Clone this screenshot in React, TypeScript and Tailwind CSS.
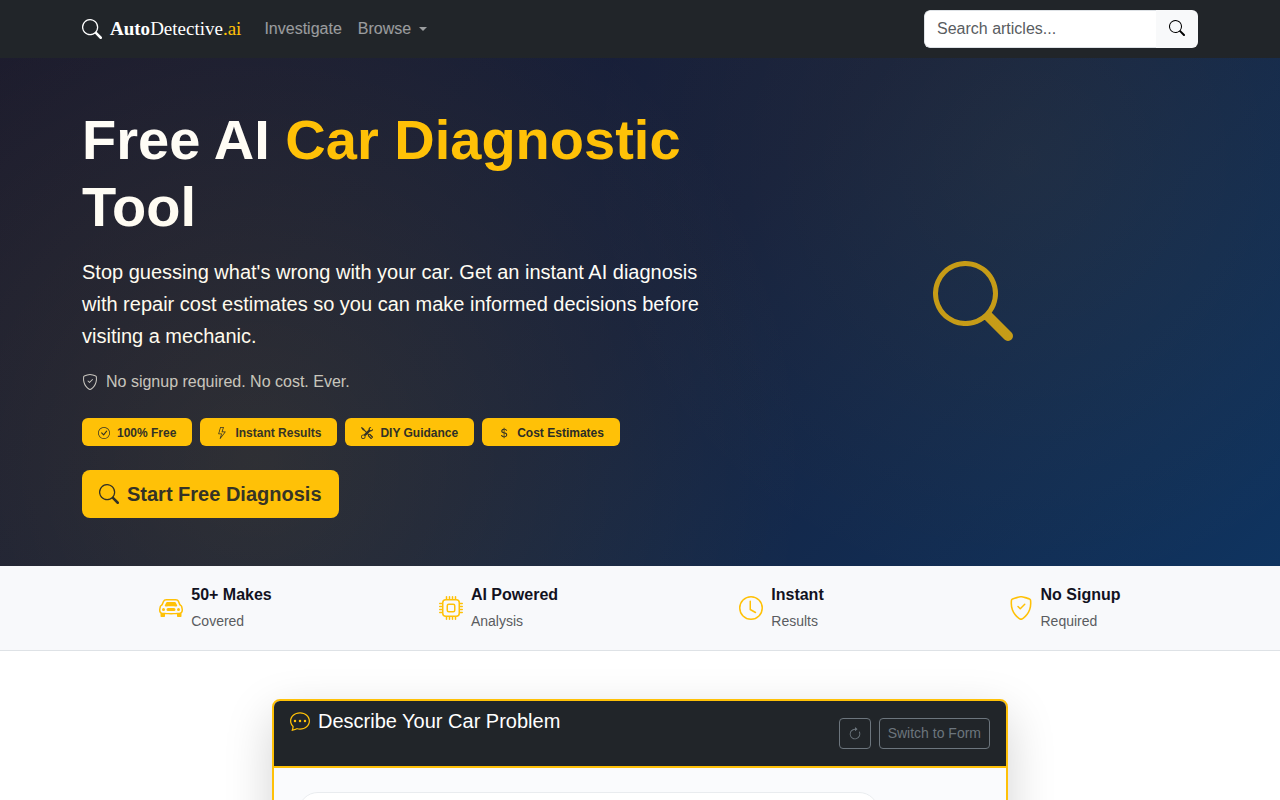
import type { ReactNode } from "react";
import type { IconType } from "react-icons";
import {
  BsArrowClockwise,
  BsCarFront,
  BsChatDots,
  BsCheckCircle,
  BsClock,
  BsCpu,
  BsCurrencyDollar,
  BsLightning,
  BsSearch,
  BsShieldCheck,
  BsTools,
} from "react-icons/bs";

const features: { icon: IconType; label: string }[] = [
  { icon: BsCheckCircle, label: "100% Free" },
  { icon: BsLightning, label: "Instant Results" },
  { icon: BsTools, label: "DIY Guidance" },
  { icon: BsCurrencyDollar, label: "Cost Estimates" },
];

const stats: { icon: IconType; title: string; caption: string }[] = [
  { icon: BsCarFront, title: "50+ Makes", caption: "Covered" },
  { icon: BsCpu, title: "AI Powered", caption: "Analysis" },
  { icon: BsClock, title: "Instant", caption: "Results" },
  { icon: BsShieldCheck, title: "No Signup", caption: "Required" },
];

function Container({ children, className = "" }: { children: ReactNode; className?: string }) {
  return <div className={`mx-auto w-full max-w-[1140px] px-3 ${className}`}>{children}</div>;
}

function Navbar() {
  return (
    <nav className="bg-[#212529] py-[10px]">
      <Container className="flex flex-wrap items-center justify-between gap-y-2">
        <div className="flex flex-wrap items-center">
          <a href="#home" className="mr-[23px] flex items-center gap-2 text-white">
            <BsSearch className="size-5" />
            <span className="font-['Liberation_Serif',serif] text-[19px] leading-[30px]">
              <strong>Auto</strong>Detective<span className="text-[#ffc107]">.ai</span>
            </span>
          </a>
          <div className="flex items-center gap-4 text-white/55">
            <a href="#chat">Investigate</a>
            <button type="button" className="flex items-center gap-2">
              Browse
              <span className="border-x-4 border-t-4 border-x-transparent border-t-current" />
            </button>
          </div>
        </div>
        <form role="search" className="flex h-[38px] w-[274px] overflow-hidden rounded-md">
          <input
            type="search"
            aria-label="Search articles"
            placeholder="Search articles..."
            className="min-w-0 flex-1 rounded-l-md border border-r-0 border-[#dee2e6] bg-white px-3 outline-none placeholder:text-[#595c5f]"
          />
          <button
            type="submit"
            aria-label="Search"
            className="bg-[#f8f9fa] px-[13px] pb-0.5 text-black"
          >
            <BsSearch className="size-4" />
          </button>
        </form>
      </Container>
    </nav>
  );
}

function Hero() {
  return (
    <section
      id="home"
      className="relative bg-[linear-gradient(135deg,#1a1a2e_0%,#16213e_50%,#0f3460_100%)] py-12 text-white"
    >
      <Container className="grid items-center gap-6 lg:grid-cols-12">
        <div className="lg:col-span-7">
          <h1 className="mb-4 text-[56px] leading-[67px] font-bold">
            Free AI <span className="text-[#ffc107]">Car Diagnostic</span> Tool
          </h1>
          <p className="mb-4 text-xl leading-8">
            Stop guessing what's wrong with your car. Get an instant AI diagnosis with repair cost
            estimates so you can make informed decisions before visiting a mechanic.
          </p>
          <p className="mb-6 flex items-center gap-2 pt-0.5 text-white/75">
            <BsShieldCheck className="size-4" />
            No signup required. No cost. Ever.
          </p>
          <ul className="mb-6 flex flex-wrap gap-2">
            {features.map(({ icon: Icon, label }) => (
              <li
                key={label}
                className="flex h-7 items-center gap-[7px] rounded-md bg-[#ffc107] px-4 pt-px text-xs font-bold text-[#212529]"
              >
                <Icon className="size-3" />
                {label}
              </li>
            ))}
          </ul>
          <a
            href="#chat"
            className="inline-flex h-12 items-center gap-2 rounded-lg bg-[#ffc107] px-[17px] align-top text-xl font-bold text-[#212529]"
          >
            <BsSearch className="size-5" />
            Start Free Diagnosis
          </a>
        </div>
        <div className="hidden justify-center pb-[22px] lg:col-span-5 lg:flex">
          <BsSearch className="size-20 text-[#ffc107] opacity-75" />
        </div>
      </Container>
      {/* warm glow over the whole banner */}
      <div className="pointer-events-none absolute inset-0 bg-[radial-gradient(circle_at_20%_80%,rgba(255,193,7,0.1)_0%,transparent_50%),radial-gradient(circle_at_80%_20%,rgba(255,193,7,0.05)_0%,transparent_40%)]" />
    </section>
  );
}

function Stats() {
  return (
    <section className="border-b border-[#dee2e6] bg-[#f8f9fb] py-4">
      <Container className="grid grid-cols-2 gap-4 md:grid-cols-4">
        {stats.map(({ icon: Icon, title, caption }) => (
          <div key={title} className="flex items-center justify-center gap-2">
            <Icon className="size-6 text-[#ffc107]" />
            <div className="leading-[26px]">
              <div className="font-bold text-[#12121f]">{title}</div>
              <div className="text-sm leading-[26px] text-[#5a5c60]">{caption}</div>
            </div>
          </div>
        ))}
      </Container>
    </section>
  );
}

function ChatCard() {
  return (
    <section id="chat" className="py-12">
      <Container>
        <div className="mx-auto max-w-[736px] overflow-hidden rounded-lg border-2 border-[#ffc107] bg-[#fafbfd] shadow-[0_16px_48px_rgba(0,0,0,0.175)]">
          <header className="flex min-h-[67px] items-center justify-between gap-4 border-b-2 border-[#ffc107] bg-[#212529] px-4 py-2">
            <h2 className="flex items-center gap-2 self-start text-xl leading-6 text-white">
              <BsChatDots className="size-5 text-[#ffc107]" />
              Describe Your Car Problem
            </h2>
            <div className="flex gap-2 text-sm text-[#6c757d]">
              <button
                type="button"
                aria-label="Start over"
                className="flex h-[31px] items-center rounded border border-[#6c757d] px-2"
              >
                <BsArrowClockwise className="size-3.5" />
              </button>
              <button type="button" className="h-[31px] rounded border border-[#6c757d] px-2 pb-0.5">
                Switch to Form
              </button>
            </div>
          </header>
          <div className="p-6">
            <div className="min-h-24 max-w-[85%] rounded-[20px] border border-[#e9ecef] bg-white" />
          </div>
        </div>
      </Container>
    </section>
  );
}

export default function App() {
  return (
    <div className="min-h-screen bg-white font-['Liberation_Sans',Arial,sans-serif] text-base text-[#212529]">
      <Navbar />
      <main>
        <Hero />
        <Stats />
        <ChatCard />
      </main>
    </div>
  );
}
